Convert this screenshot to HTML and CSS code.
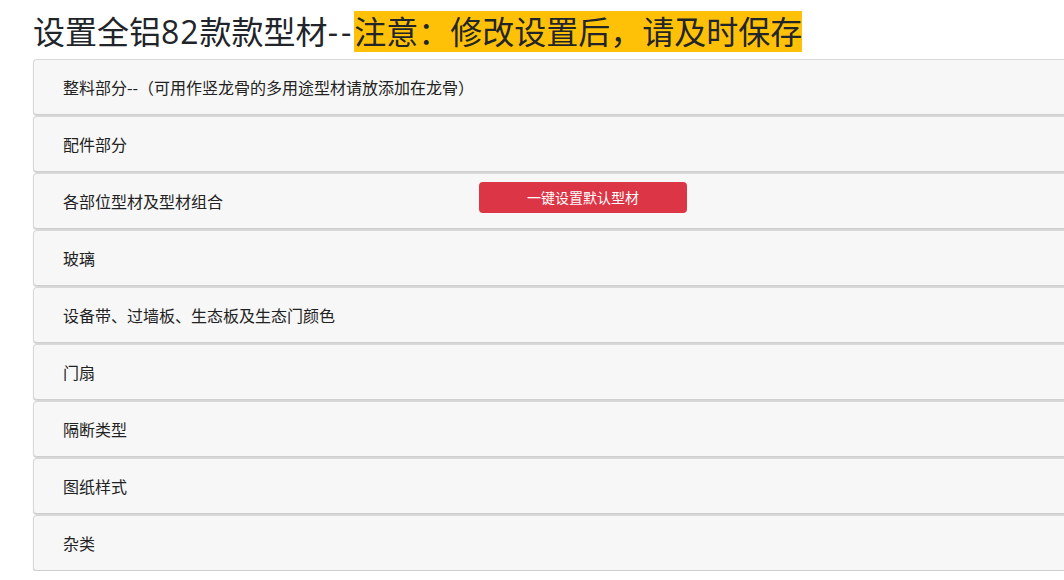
FILE: index.html
```html
<!DOCTYPE html>
<html lang="zh-CN">
<head>
<meta charset="utf-8">
<title>设置全铝82款款型材</title>
<link rel="stylesheet" href="styles.css">
</head>
<body>
<h1 class="page-title">设置全铝<span class="latin">82</span>款款型材<span class="latin dash">--</span><span class="notice">注意：修改设置后，请及时保存</span></h1>
<div class="panel-list">
  <div class="panel"><div class="panel-heading">整料部分--（可用作竖龙骨的多用途型材请放添加在龙骨）</div></div>
  <div class="panel"><div class="panel-heading">配件部分</div></div>
  <div class="panel"><div class="panel-heading"><span class="label-wide">各部位型材及型材组合</span><button class="btn-danger" type="button">一键设置默认型材</button></div></div>
  <div class="panel"><div class="panel-heading">玻璃</div></div>
  <div class="panel"><div class="panel-heading">设备带、过墙板、生态板及生态门颜色</div></div>
  <div class="panel"><div class="panel-heading">门扇</div></div>
  <div class="panel"><div class="panel-heading">隔断类型</div></div>
  <div class="panel"><div class="panel-heading">图纸样式</div></div>
  <div class="panel"><div class="panel-heading">杂类</div></div>
</div>
</body>
</html>
```
FILE: styles.css
```css
html {
  overflow: hidden;
}
body {
  margin: 0;
  padding: 11px 0 0 33px;
  font-family: "Open Sans", "Noto Sans CJK SC", sans-serif;
  color: #212529;
  background: #fff;
}
.page-title {
  margin: 0 0 7px;
  font-size: 32px;
  font-weight: 400;
  line-height: 41px;
  height: 41px;
  white-space: nowrap;
  font-family: "Open Sans", "Noto Sans CJK SC", sans-serif;
}
.latin {
  letter-spacing: 1px;
}
.dash {
  letter-spacing: 3px;
}
.notice {
  display: inline-block;
  background: #ffc107;
  height: 41px;
  line-height: 41px;
}
.panel-list {
  display: flex;
  flex-direction: column;
  gap: 1px;
  margin-right: -40px;
}
.panel {
  background: #f7f7f7;
  border: 1px solid #d8d8d8;
  border-bottom-color: #cfcfcf;
  border-radius: 4px;
  box-shadow: 0 1px 1px rgba(0, 0, 0, 0.18);
}
.panel-heading {
  height: 54px;
  display: flex;
  align-items: center;
  padding-left: 29px;
  font-size: 16px;
  font-family: "Noto Sans CJK SC", sans-serif;
  color: #222;
}
.label-wide {
  flex: 0 0 416px;
}
.btn-danger {
  width: 208px;
  height: 31px;
  margin-top: -8px;
  border: none;
  border-radius: 4px;
  background: #dc3545;
  color: #fff;
  font-size: 14px;
  font-family: "Noto Sans CJK SC", sans-serif;
  padding: 0;
}
```
